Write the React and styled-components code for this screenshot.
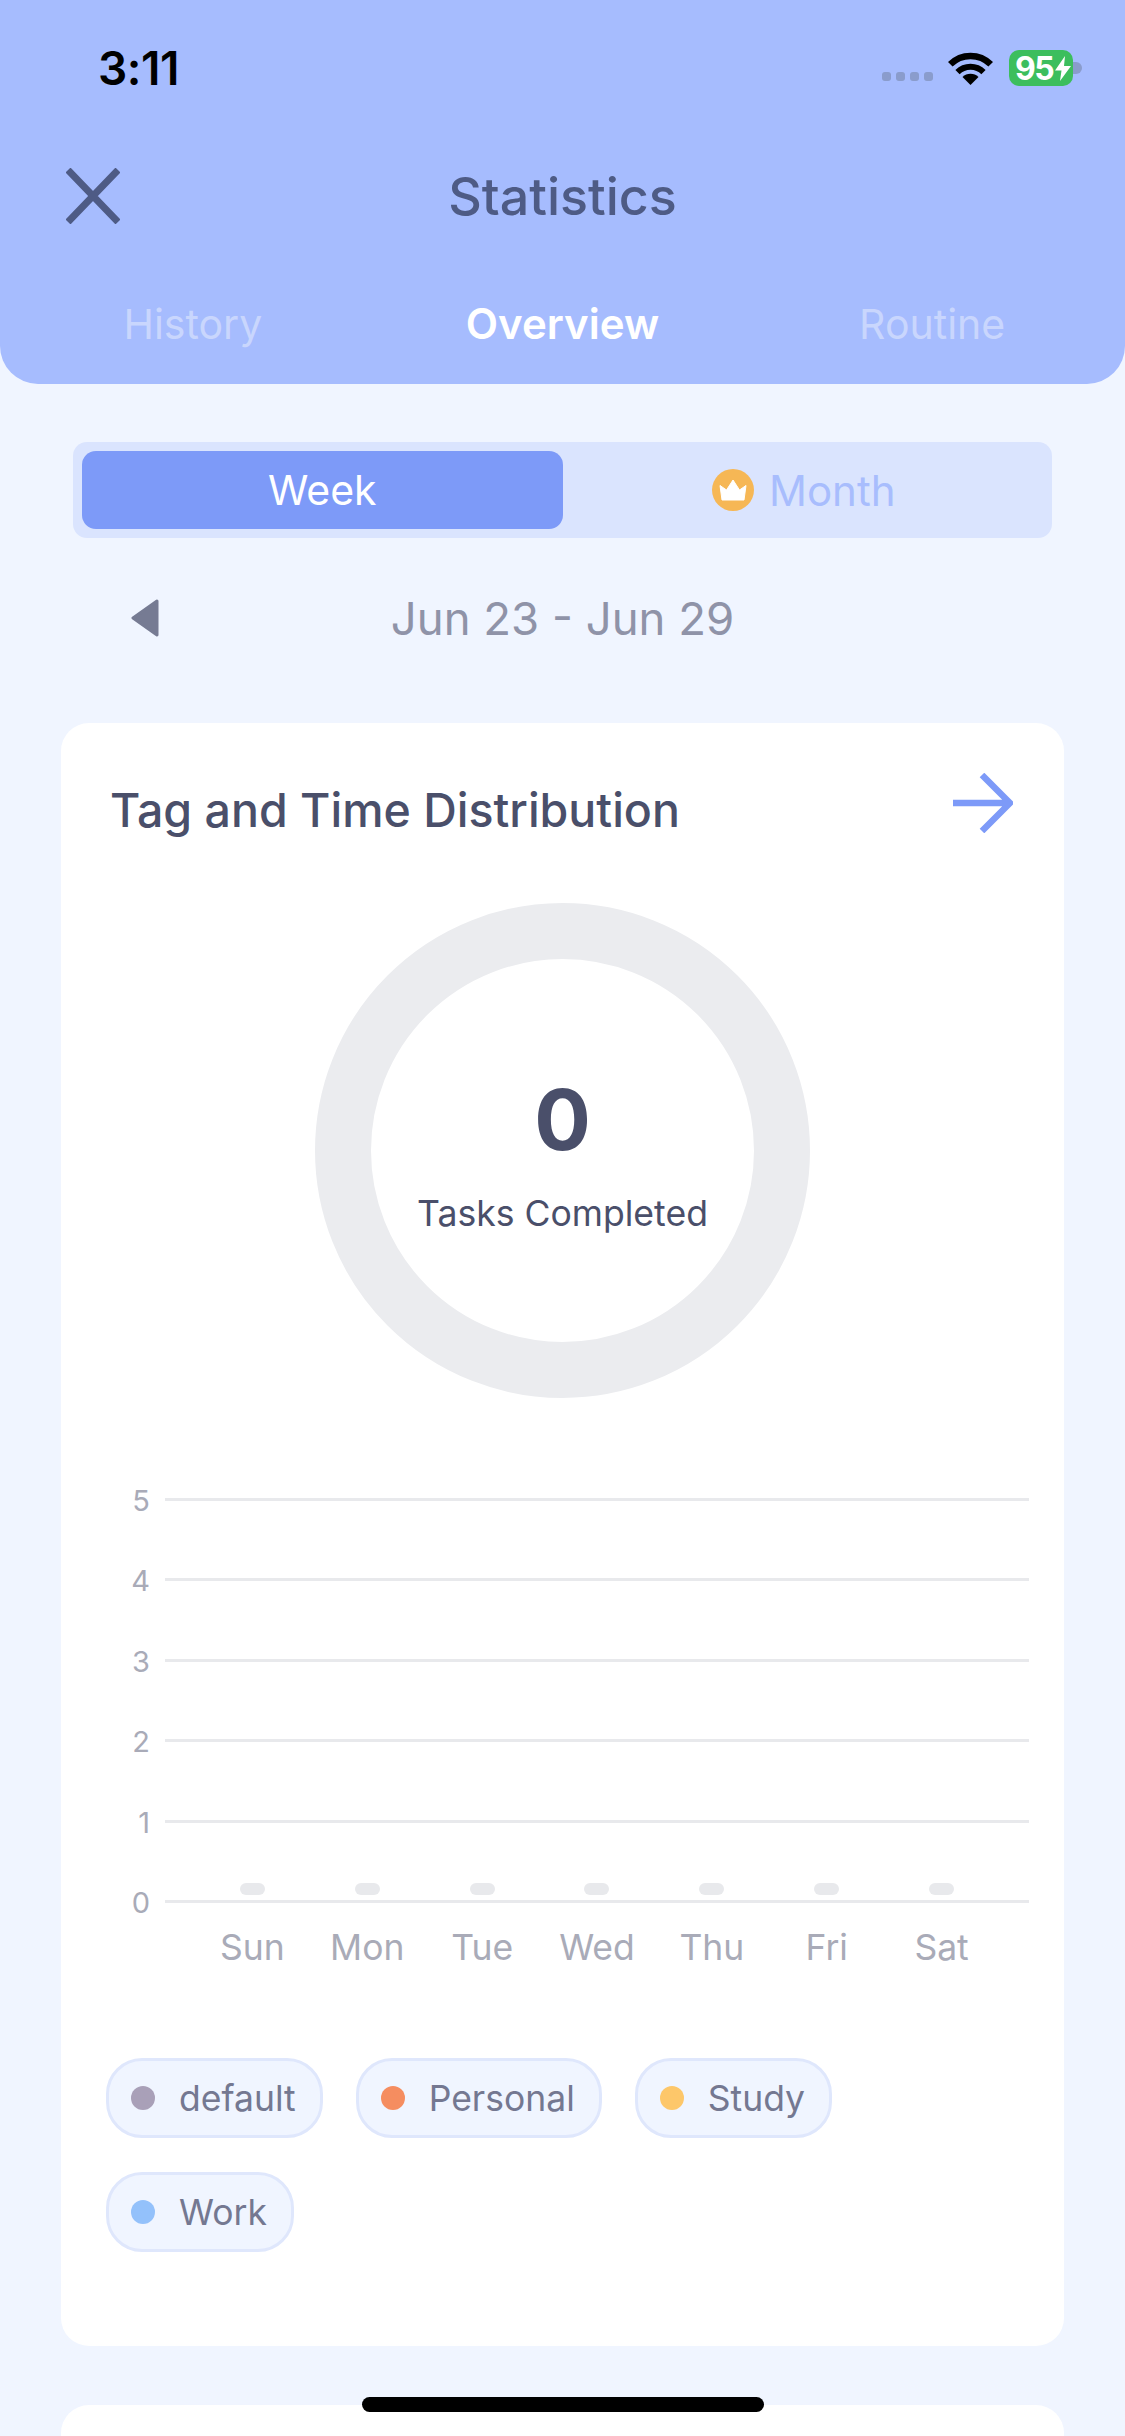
import styled, { createGlobalStyle } from "styled-components";

const GlobalStyle = createGlobalStyle`
  html, body {
    margin: 0;
    padding: 0;
    background: #f0f5ff;
  }
  * {
    box-sizing: border-box;
  }
  body {
    font-family: Inter, "Noto Sans", sans-serif;
  }
`;

const Page = styled.div`
  position: relative;
  width: 1125px;
  height: 2436px;
  overflow: hidden;
  background: #f0f5ff;
`;

const Header = styled.header`
  height: 384px;
  background: #a6bcfe;
  border-bottom-left-radius: 38px;
  border-bottom-right-radius: 38px;
`;

const StatusBar = styled.div`
  height: 136px;
  padding: 0 52px 0 98px;
  display: flex;
  align-items: center;
  justify-content: space-between;
`;

const Time = styled.div`
  font-size: 46px;
  font-weight: 600;
  letter-spacing: -0.5px;
  color: #000;
`;

const StatusIcons = styled.div`
  display: flex;
  align-items: center;
`;

const Signal = styled.div`
  display: flex;
  gap: 5px;
  margin: 16px 15px 0 0;
`;

const SignalDot = styled.span`
  width: 9px;
  height: 9px;
  border-radius: 3px;
  background: #8a9ccc;
`;

const Battery = styled.div`
  position: relative;
  margin-left: 16px;
  width: 64px;
  height: 36px;
  border-radius: 10px;
  background: #3cbe5d;
  padding-left: 6px;
  display: flex;
  align-items: center;
  color: #fff;
  font-size: 32px;
  font-weight: 700;
  letter-spacing: -1.5px;
  &::after {
    content: "";
    position: absolute;
    right: -9px;
    top: 12px;
    width: 9px;
    height: 12px;
    border-radius: 0 6px 6px 0;
    background: #8a9ccc;
  }
`;

const BoltSvg = styled.svg`
  flex-shrink: 0;
  margin-left: 1px;
`;

const NavBar = styled.div`
  height: 124px;
  padding: 0 66px 4px;
  display: grid;
  grid-template-columns: 1fr auto 1fr;
  align-items: center;
`;

const Title = styled.h1`
  margin: 0;
  font-size: 52px;
  font-weight: 500;
  color: #4e5b85;
`;

const Tabs = styled.nav`
  padding: 3px 8px 0 8px;
  display: grid;
  grid-template-columns: repeat(3, 1fr);
  height: 124px;
  align-items: center;
`;

const Tab = styled.div`
  text-align: center;
  font-size: ${(p) => (p.$active ? 42 : 41)}px;
  font-weight: ${(p) => (p.$active ? 600 : 400)};
  color: ${(p) => (p.$active ? "#fff" : "#c9d6fd")};
`;

const Main = styled.main`
  padding: 0 61px;
`;

const Segmented = styled.div`
  margin: 58px 12px 0;
  height: 96px;
  padding: 9px;
  display: flex;
  border-radius: 14px;
  background: #dae4fe;
`;

const Segment = styled.div`
  flex: 1;
  border-radius: 14px;
  background: ${(p) => (p.$active ? "#7d9af8" : "transparent")};
  color: ${(p) => (p.$active ? "#fff" : "#a8bdfd")};
  font-size: ${(p) => (p.$active ? 41 : 42)}px;
  display: flex;
  align-items: center;
  justify-content: center;
  gap: 15px;
`;

const CrownBadge = styled.span`
  width: 42px;
  height: 42px;
  margin-left: 2px;
  border-radius: 50%;
  background: #f6b755;
  display: flex;
  align-items: center;
  justify-content: center;
`;

const DateRow = styled.div`
  margin-top: 48px;
  height: 64px;
  display: grid;
  grid-template-columns: 1fr auto 1fr;
  align-items: center;
  padding-left: 70px;
  padding-right: 70px;
`;

const DateText = styled.div`
  font-size: 45.5px;
  color: #8f93a8;
`;

const Card = styled.section`
  margin-top: ${(p) => p.$top}px;
  height: ${(p) => p.$height}px;
  background: #fff;
  border-radius: 28px;
`;

const CardHeader = styled.div`
  padding: 40px 51px 0 49px;
  height: 120px;
  display: flex;
  align-items: center;
  justify-content: space-between;
`;

const CardTitle = styled.h2`
  margin: 13px 0 0;
  font-size: 46.5px;
  font-weight: 500;
  color: #4a4f6a;
`;

const DonutWrap = styled.div`
  margin-top: 60px;
  display: flex;
  justify-content: center;
`;

const Donut = styled.div`
  width: 495px;
  height: 495px;
  border-radius: 50%;
  border: 56px solid #ebecef;
  display: flex;
  flex-direction: column;
  align-items: center;
  justify-content: center;
`;

const DonutValue = styled.div`
  font-size: 84px;
  font-weight: 700;
  line-height: 100px;
  margin-top: 4px;
  color: #4a4f6a;
`;

const DonutLabel = styled.div`
  margin-top: 22px;
  font-size: 35.6px;
  color: #4a4f6a;
`;

const Chart = styled.div`
  margin: 100px 35px 0 39px;
`;

const Plot = styled.div`
  position: relative;
  height: 405px;
  display: flex;
  flex-direction: column;
  justify-content: space-between;
`;

const GridRow = styled.div`
  height: 3px;
  display: flex;
  align-items: center;
`;

const AxisLabel = styled.div`
  width: 50px;
  margin-right: 15px;
  padding-top: 2px;
  text-align: right;
  font-size: 29px;
  line-height: 3px;
  color: #a9abb8;
`;

const GridLine = styled.div`
  flex: 1;
  height: 3px;
  background: #e8e9ec;
`;

const Bars = styled.div`
  position: absolute;
  left: 95px;
  bottom: 8px;
  width: 804px;
  display: grid;
  grid-template-columns: repeat(7, 1fr);
  justify-items: center;
`;

const Bar = styled.div`
  width: 25px;
  height: 12px;
  border-radius: 6px;
  background: #e8e9ec;
`;

const Days = styled.div`
  margin: 23px 0 0 95px;
  width: 804px;
  display: grid;
  grid-template-columns: repeat(7, 1fr);
`;

const Day = styled.div`
  text-align: center;
  font-size: 35.5px;
  line-height: 44px;
  color: #a9abb8;
`;

const Legend = styled.div`
  margin-top: 88px;
  padding: 0 45px;
  display: flex;
  flex-wrap: wrap;
  gap: 34px 33px;
`;

const Pill = styled.div`
  height: 80px;
  padding: 0 24px 0 22px;
  border: 3px solid #dfe7fc;
  border-radius: 36px;
  background: #f0f5ff;
  display: flex;
  align-items: center;
  gap: 24px;
  font-size: 35.5px;
  color: #747891;
`;

const Dot = styled.span`
  width: 24px;
  height: 24px;
  border-radius: 50%;
  background: ${(p) => p.$color};
`;

const HomeBar = styled.div`
  position: absolute;
  left: 362px;
  top: 2397px;
  width: 402px;
  height: 15px;
  border-radius: 8px;
  background: #000;
`;

const axis = [5, 4, 3, 2, 1, 0];
const days = ["Sun", "Mon", "Tue", "Wed", "Thu", "Fri", "Sat"];
const tags = [
  { name: "default", color: "#a9a0b8" },
  { name: "Personal", color: "#f58d60" },
  { name: "Study", color: "#fdc76a" },
  { name: "Work", color: "#93c1fb" },
];

function WifiIcon() {
  return (
    <svg width="45" height="33" viewBox="0 0 45 33" fill="none">
      <path d="M2.3 12.3A28.5 28.5 0 0 1 42.7 12.3" stroke="#000" strokeWidth="6.5" />
      <path d="M9.5 20.2A18.4 18.4 0 0 1 35.5 20.2" stroke="#000" strokeWidth="6" />
      <path d="M22.5 33L14.5 25A11.3 11.3 0 0 1 30.5 25Z" fill="#000" />
    </svg>
  );
}

function BoltIcon() {
  return (
    <BoltSvg width="18" height="25" viewBox="0 0 18 25">
      <path d="M11 0L1 14.5H7.5L6 25L17 10H10Z" fill="#fff" />
    </BoltSvg>
  );
}

function CrownIcon() {
  return (
    <svg width="28" height="22" viewBox="0 0 28 22">
      <path d="M1 6.5L7.5 11L14 1L20.5 11L27 6.5L25 21H3Z" fill="#fff" strokeLinejoin="round" stroke="#fff" strokeWidth="1" />
    </svg>
  );
}

function CloseIcon() {
  return (
    <svg width="54" height="56" viewBox="0 0 54 56">
      <path d="M2 2L52 54M52 2L2 54" stroke="#4e5b85" strokeWidth="7" fill="none" />
    </svg>
  );
}

function PrevIcon() {
  return (
    <svg width="28" height="38" viewBox="0 0 28 38">
      <path d="M26 2L2 19L26 36Z" fill="#767b93" stroke="#767b93" strokeWidth="3" strokeLinejoin="round" />
    </svg>
  );
}

function ArrowIcon() {
  return (
    <svg width="60" height="60" viewBox="0 0 60 60">
      <path d="M0 30H56M29 2L57 30L29 58" stroke="#7d9af8" strokeWidth="6.5" fill="none" />
    </svg>
  );
}

export default function App() {
  return (
    <Page>
      <GlobalStyle />
      <Header>
        <StatusBar>
          <Time>3:11</Time>
          <StatusIcons>
            <Signal>
              <SignalDot />
              <SignalDot />
              <SignalDot />
              <SignalDot />
            </Signal>
            <WifiIcon />
            <Battery>
              95
              <BoltIcon />
            </Battery>
          </StatusIcons>
        </StatusBar>
        <NavBar>
          <CloseIcon />
          <Title>Statistics</Title>
        </NavBar>
        <Tabs>
          <Tab>History</Tab>
          <Tab $active>Overview</Tab>
          <Tab>Routine</Tab>
        </Tabs>
      </Header>
      <Main>
        <Segmented>
          <Segment $active>Week</Segment>
          <Segment>
            <CrownBadge>
              <CrownIcon />
            </CrownBadge>
            Month
          </Segment>
        </Segmented>
        <DateRow>
          <PrevIcon />
          <DateText>Jun 23 - Jun 29</DateText>
        </DateRow>
        <Card $top={73} $height={1623}>
          <CardHeader>
            <CardTitle>Tag and Time Distribution</CardTitle>
            <ArrowIcon />
          </CardHeader>
          <DonutWrap>
            <Donut>
              <DonutValue>0</DonutValue>
              <DonutLabel>Tasks Completed</DonutLabel>
            </Donut>
          </DonutWrap>
          <Chart>
            <Plot>
              {axis.map((n) => (
                <GridRow key={n}>
                  <AxisLabel>{n}</AxisLabel>
                  <GridLine />
                </GridRow>
              ))}
              <Bars>
                {days.map((d) => (
                  <Bar key={d} />
                ))}
              </Bars>
            </Plot>
            <Days>
              {days.map((d) => (
                <Day key={d}>{d}</Day>
              ))}
            </Days>
          </Chart>
          <Legend>
            {tags.map((t) => (
              <Pill key={t.name}>
                <Dot $color={t.color} />
                {t.name}
              </Pill>
            ))}
          </Legend>
        </Card>
        <Card $top={59} $height={300} />
      </Main>
      <HomeBar />
    </Page>
  );
}
